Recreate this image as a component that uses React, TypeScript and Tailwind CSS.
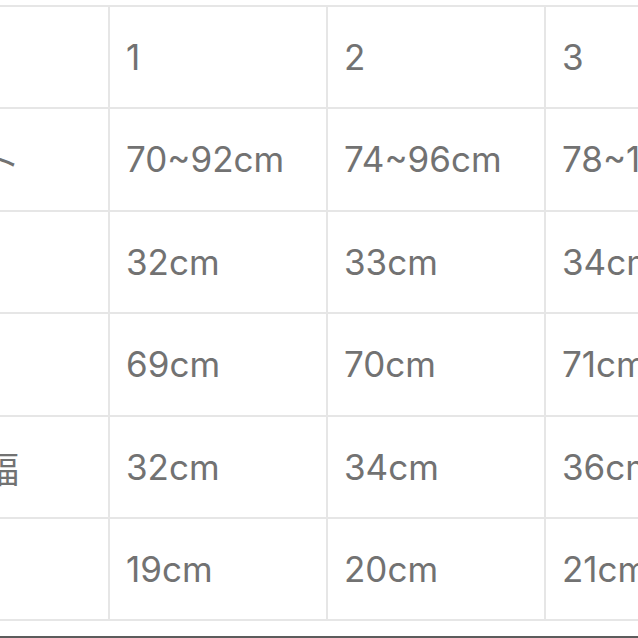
import React from "react";

const rows: string[][] = [
  ["", "1", "2", "3"],
  ["ウエスト", "70~92cm", "74~96cm", "78~100cm"],
  ["股上", "32cm", "33cm", "34cm"],
  ["総丈", "69cm", "70cm", "71cm"],
  ["渡り幅", "32cm", "34cm", "36cm"],
  ["裾幅", "19cm", "20cm", "21cm"],
];

const App = () => {
  return (
    <div className="w-[638px] h-[638px] bg-white overflow-hidden flex flex-col pt-[5px]">
      <div className="ml-[-108px] w-[872px] border-t-2 border-[#e6e6e6]">
        {rows.map((row, i) => (
          <div key={i} className="flex h-[102.4px] border-b-2 border-[#e6e6e6]">
            {row.map((cell, j) => (
              <div
                key={j}
                className="w-[218px] shrink-0 border-r-2 border-[#e6e6e6] flex items-center pl-[16px] overflow-hidden"
              >
                {j === 0 ? (
                  <span
                    className={
                      i === 1
                        ? "whitespace-nowrap text-[36px] text-[#727272] font-['Noto_Sans_CJK_JP',sans-serif] [font-feature-settings:'palt'] tracking-[-6px]"
                        : "whitespace-nowrap text-[36px] text-[#727272] font-['Noto_Sans_CJK_JP',sans-serif] pl-[3px]"
                    }
                  >
                    {cell}
                  </span>
                ) : (
                  <span className="whitespace-nowrap text-[35px] text-[#727272] font-['Inter','Noto_Sans_CJK_JP',sans-serif]">
                    {cell}
                  </span>
                )}
              </div>
            ))}
          </div>
        ))}
      </div>
      <div className="flex-1" />
      <div className="h-[2px] bg-[#5c5c5c]" />
    </div>
  );
};

export default App;
